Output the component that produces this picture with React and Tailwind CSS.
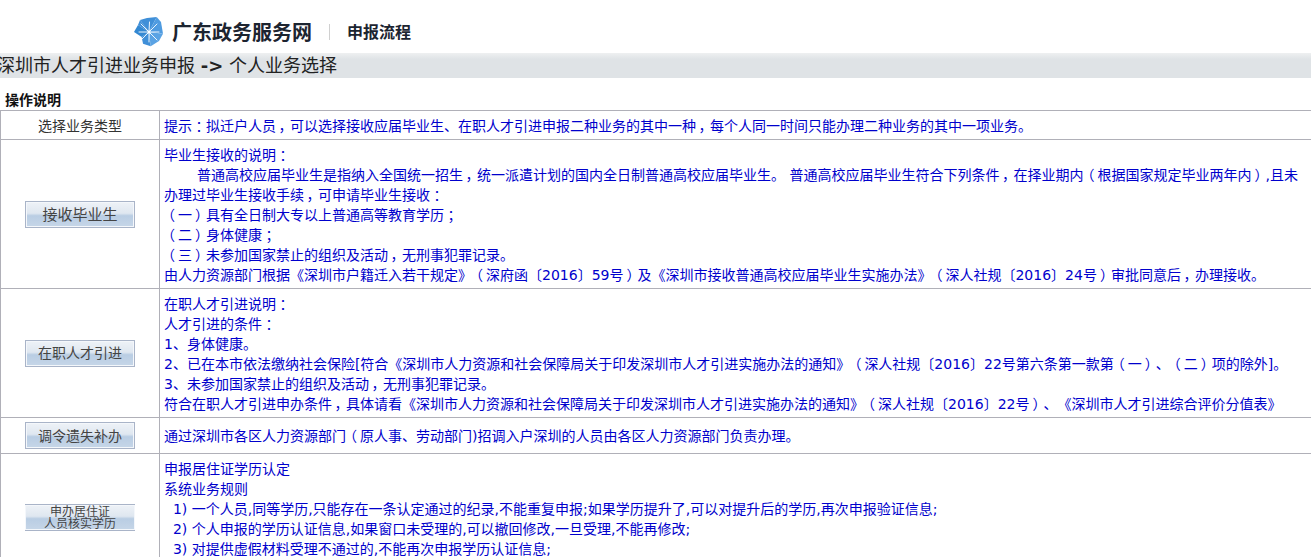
import React from "react"

const Logo = () => (
  <svg width="30" height="30" viewBox="0 0 30 30" className="shrink-0">
    <path d="M6 3L13 1L22.7 0L15 15Z" fill="#3f8fd8" />
    <path d="M22.7 0L27 5L29 16.7L15 15Z" fill="#4f9be0" />
    <path d="M29 16.7L25 24L16.7 29.3L15 15Z" fill="#5aa3e4" />
    <path d="M16.7 29.3L9 26.7L7.7 20L15 15Z" fill="#3f8fd8" />
    <path d="M7.7 20L0 15L4 8L15 15Z" fill="#3388d2" />
    <path d="M4 8L6 3L15 15Z" fill="#3f8fd8" />
    <g stroke="#ffffff" strokeWidth="0.9" strokeLinecap="round">
      <path d="M15 15L7 7" />
      <path d="M15 15L15.5 5" />
      <path d="M15 15L23 7" />
      <path d="M15 15L25 15" />
      <path d="M15 15L23 23" />
      <path d="M15 15L15 25" />
      <path d="M15 15L8 22" />
      <path d="M15 15L5 15" />
    </g>
    <circle cx="15" cy="15" r="1.5" fill="#ffffff" />
  </svg>
)

const ActionButton = ({ className = "", children }) => (
  <button className={`mx-auto flex h-[27px] w-[110px] flex-col items-center justify-center border border-[#a9b4c8] bg-[linear-gradient(#eef2f7_0%,#dfe7f0_45%,#b9cde3_55%,#c6d6e8_100%)] text-[#444] shadow-[inset_0_0_0_1px_#f4f7fb] ${className}`}>
    {children}
  </button>
)

// the reference font centres these marks in their cell
const Text = ({ children }) =>
  children.split(/([，：；（）])/).map((part, i) =>
    i % 2 ? (
      <span key={i} className="inline-block w-[1em] text-center [font-feature-settings:'palt']">
        {part}
      </span>
    ) : (
      part
    )
  )

const Lines = ({ lines }) => (
  <div className="whitespace-nowrap">
    {lines.map((line, i) => (
      <div key={i} className={line.indent ? "pl-[33px]" : ""}>
        <Text>{line.text || line}</Text>
      </div>
    ))}
  </div>
)

const rows = [
  {
    button: <ActionButton className="pt-[1px] text-[15px]">接收毕业生</ActionButton>,
    lines: [
      "毕业生接收的说明：",
      { indent: true, text: "普通高校应届毕业生是指纳入全国统一招生，统一派遣计划的国内全日制普通高校应届毕业生。 普通高校应届毕业生符合下列条件，在择业期内（根据国家规定毕业两年内）,且未" },
      "办理过毕业生接收手续，可申请毕业生接收：",
      "（一）具有全日制大专以上普通高等教育学历；",
      "（二）身体健康；",
      "（三）未参加国家禁止的组织及活动，无刑事犯罪记录。",
      "由人力资源部门根据《深圳市户籍迁入若干规定》（深府函〔2016〕59号）及《深圳市接收普通高校应届毕业生实施办法》（深人社规〔2016〕24号）审批同意后，办理接收。",
    ],
    height: "h-[149px]",
    align: "align-middle pt-[2px]",
  },
  {
    button: <ActionButton className="text-[14px]">在职人才引进</ActionButton>,
    lines: [
      "在职人才引进说明：",
      "人才引进的条件：",
      "1、身体健康。",
      "2、已在本市依法缴纳社会保险[符合《深圳市人力资源和社会保障局关于印发深圳市人才引进实施办法的通知》（深人社规〔2016〕22号第六条第一款第（一）、（二）项的除外]。",
      "3、未参加国家禁止的组织及活动，无刑事犯罪记录。",
      "符合在职人才引进申办条件，具体请看《深圳市人力资源和社会保障局关于印发深圳市人才引进实施办法的通知》（深人社规〔2016〕22号）、《深圳市人才引进综合评价分值表》",
    ],
    height: "h-[129px]",
    align: "align-middle pt-[2px]",
  },
  {
    button: <ActionButton className="text-[14px]">调令遗失补办</ActionButton>,
    lines: ["通过深圳市各区人力资源部门（原人事、劳动部门)招调入户深圳的人员由各区人力资源部门负责办理。"],
    height: "h-[36px]",
    align: "align-middle",
  },
  {
    button: (
      <ActionButton className="border-x-0 text-[12px] leading-[12px]">
        <span>申办居住证</span>
        <span>人员核实学历</span>
      </ActionButton>
    ),
    lines: [
      "申报居住证学历认定",
      "系统业务规则",
      "\u00a0\u00a01) 一个人员,同等学历,只能存在一条认定通过的纪录,不能重复申报;如果学历提升了,可以对提升后的学历,再次申报验证信息;",
      "\u00a0\u00a02) 个人申报的学历认证信息,如果窗口未受理的,可以撤回修改,一旦受理,不能再修改;",
      "\u00a0\u00a03) 对提供虚假材料受理不通过的,不能再次申报学历认证信息;",
    ],
    height: "h-[128px]",
    align: "align-top pt-[5px]",
  },
]

export default function App() {
  return (
    <div className="h-[557px] w-[1311px] overflow-hidden bg-white font-['DejaVu_Sans','Noto_Sans_CJK_SC',sans-serif] text-[14px] leading-[20px] [text-spacing-trim:space-all]">
      {/* Header */}
      <div className="flex h-[53px] items-center pl-[134px] pt-[10px]">
        <Logo />
        <span className="ml-[8px] pt-[2px] text-[20px] font-bold text-[#1c2430]">广东政务服务网</span>
        <span className="ml-[17px] h-[16px] w-px bg-[#d0d0d0]" />
        <span className="ml-[17px] pt-[2px] text-[16px] font-bold text-[#1c2430]">申报流程</span>
      </div>

      {/* Title bar */}
      <div className="flex h-[25px] items-center overflow-hidden whitespace-nowrap bg-[linear-gradient(#eef0f1_0%,#dfe3e6_25%,#dfe3e6_100%)] text-[18px] text-[#222]">
        <span className="ml-[-3px]">深圳市人才引进业务申报 <b>-&gt;</b> 个人业务选择</span>
      </div>

      <div className="flex h-[32px] items-end pl-[5px] text-[14px] font-bold text-[#111]">操作说明</div>

      <table className="w-[1312px] table-fixed border-collapse text-[#0000cc]">
        <colgroup>
          <col className="w-[159px]" />
          <col />
        </colgroup>
        <tbody>
          <tr className="h-[29px]">
            <td className="border border-[#b0b0b8] pt-[2px] text-center text-[#333]">选择业务类型</td>
            <td className="whitespace-nowrap border border-[#b0b0b8] pl-[4px] pt-[2px]">
              <Text>提示：拟迁户人员，可以选择接收应届毕业生、在职人才引进申报二种业务的其中一种，每个人同一时间只能办理二种业务的其中一项业务。</Text>
            </td>
          </tr>
          {rows.map((row, i) => (
            <tr key={i} className={row.height}>
              <td className="border border-[#b0b0b8] align-middle">{row.button}</td>
              <td className={`border border-[#b0b0b8] pl-[4px] ${row.align}`}>
                <Lines lines={row.lines} />
              </td>
            </tr>
          ))}
        </tbody>
      </table>
    </div>
  )
}
